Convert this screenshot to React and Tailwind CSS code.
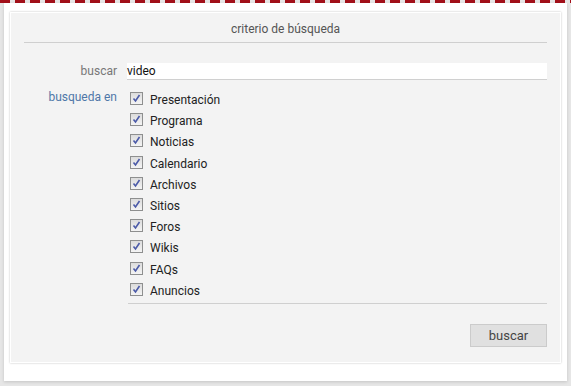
import React from 'react';

const secciones = ['Presentación', 'Programa', 'Noticias', 'Calendario', 'Archivos', 'Sitios', 'Foros', 'Wikis', 'FAQs', 'Anuncios'];

function Check() {
  return (
    <span className="w-[13px] h-[13px] border border-[#8e8f8f] bg-[linear-gradient(#dcdcdc,#f4f4f4)] flex items-center justify-center shrink-0">
      <svg width="9" height="9" viewBox="0 0 9 9">
        <path d="M1.5 4.5 L3.5 7 L7.5 1" fill="none" stroke="#4b5aa8" strokeWidth="1.6" />
      </svg>
    </span>
  );
}

export default function App() {
  return (
    <div className="min-h-[386px] bg-[#e6e6e6] font-['Roboto',sans-serif]">
      <div className="h-[3px] bg-[repeating-linear-gradient(90deg,#a3101a_0_10px,transparent_10px_15px)]" />
      <div className="mx-[4px] bg-white h-[378px] pt-[9px] px-[6px] shadow-[0_1px_3px_rgba(0,0,0,0.15)]">
        <div className="h-[351px] bg-[#f3f3f3] border border-white shadow-[0_0_2px_rgba(0,0,0,0.25)] px-[13px]">
          <div className="text-center text-[12px] text-[#555] pt-[7px] pb-[4px] border-b border-[#cfcfcf]">criterio de búsqueda</div>

          <div className="flex items-center mt-[19px]">
            <div className="w-[93px] text-right text-[12px] text-[#777]">buscar</div>
            <div className="ml-[10px] flex-1 h-[17px] bg-white border-b border-[#d0d0d0] text-[12px] text-[#111] leading-[16px]">video</div>
          </div>

          <div className="flex mt-[9px]">
            <div className="w-[93px] text-right text-[12px] text-[#4f77a8] leading-[17px]">busqueda en</div>
            <div className="ml-[11px] flex-1">
              <div className="flex flex-col gap-[4px] pl-[2px] pt-[1px]">
                {secciones.map((s) => (
                  <label key={s} className="flex items-center gap-[7px] h-[17.2px] text-[12px] text-[#222]">
                    <Check />
                    <span className="mt-[3px]">{s}</span>
                  </label>
                ))}
              </div>
              <div className="border-b border-[#cfcfcf] mt-[5px]" />
              <div className="flex justify-end mt-[20px]">
                <button className="w-[77px] h-[23px] bg-[#e0e0e0] border border-[#cbcbcb] text-[13px] text-[#444]">buscar</button>
              </div>
            </div>
          </div>
        </div>
      </div>
    </div>
  );
}
